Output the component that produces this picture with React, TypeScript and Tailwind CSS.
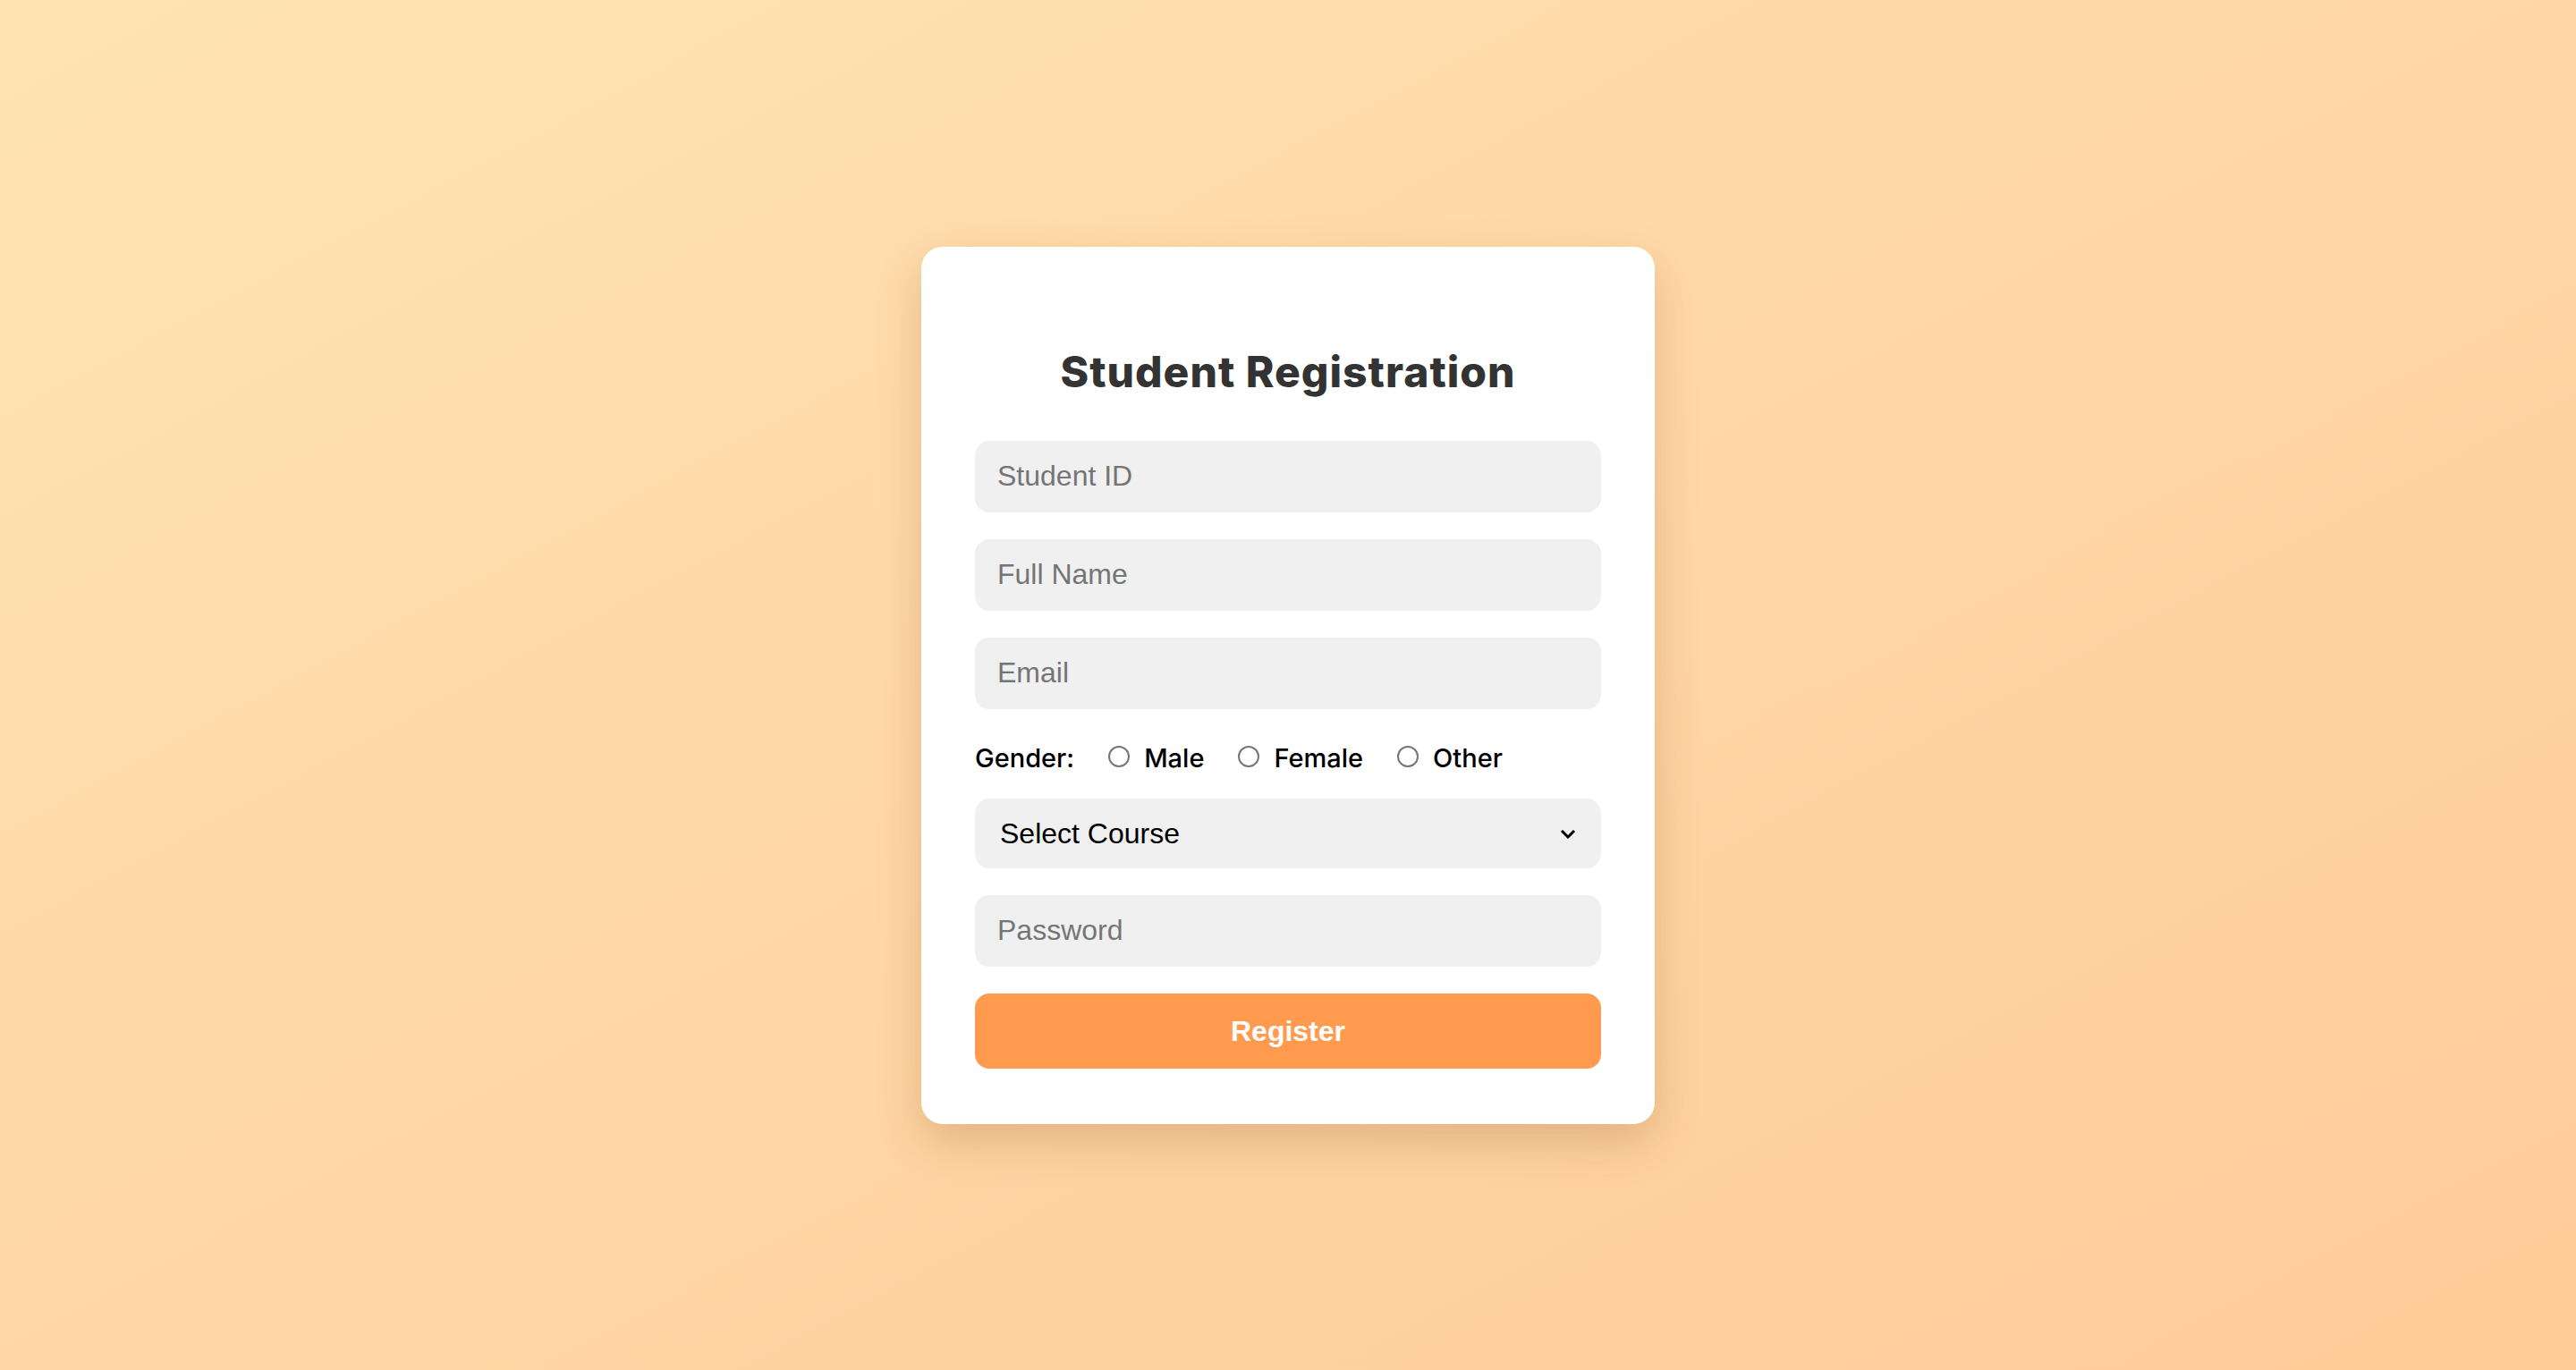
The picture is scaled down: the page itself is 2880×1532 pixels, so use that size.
import { useState } from 'react';

const fieldClass =
  'h-[80px] w-full rounded-[16px] bg-[#f0f0f0] px-[25px] text-[32px] text-black outline-none placeholder:text-[#757575] font-["Liberation_Sans",Arial,sans-serif]';

const genders = ['Male', 'Female', 'Other'];

const App = () => {
  const [gender, setGender] = useState('');

  return (
    <main className="flex h-screen w-full items-center justify-center bg-linear-to-br from-[#ffe3b3] to-[#ffcb97]">
      <form
        onSubmit={(e) => e.preventDefault()}
        className="flex w-[820px] flex-col rounded-[24px] bg-white px-[60px] pt-[111px] pb-[62px] shadow-[0_20px_50px_rgba(120,70,20,0.22)]"
      >
        {/* Title */}
        <h2 className="mb-[48px] text-center font-['Inter',sans-serif] text-[48px] leading-[58px] font-extrabold tracking-[1px] text-[#333333]">
          Student Registration
        </h2>

        <div className="flex flex-col gap-[30px]">
          <input type="text" placeholder="Student ID" className={fieldClass} />
          <input type="text" placeholder="Full Name" className={fieldClass} />
          <input type="email" placeholder="Email" className={fieldClass} />

          {/* Gender */}
          <div className="flex h-[40px] items-center pt-[10px] font-['Inter',sans-serif] text-[29px] font-medium text-black">
            <span className="mr-[38px]">Gender:</span>
            {genders.map((g) => (
              <label key={g} className="mr-[38px] flex items-center gap-[16px]">
                <input
                  type="radio"
                  name="gender"
                  checked={gender === g}
                  onChange={() => setGender(g)}
                  className="relative -top-[2px] h-[24px] w-[24px] appearance-none rounded-full border-2 border-[#767676] bg-white checked:border-[7px] checked:border-[#ff9a4e]"
                />
                <span>{g}</span>
              </label>
            ))}
          </div>

          {/* Course */}
          <div className="relative">
            <select
              defaultValue=""
              className="h-[78px] w-full appearance-none rounded-[16px] bg-[#f0f0f0] pr-[60px] pl-[28px] font-['Liberation_Sans',Arial,sans-serif] text-[32px] text-black outline-none"
            >
              <option value="" disabled>
                Select Course
              </option>
              <option>Computer Science</option>
              <option>Information Technology</option>
              <option>Electronics</option>
              <option>Mechanical</option>
            </select>
            <svg
              viewBox="0 0 18 11"
              className="pointer-events-none absolute top-[34px] right-[28px] h-[11px] w-[18px]"
              fill="none"
              stroke="black"
              strokeWidth="3"
            >
              <path d="M2 2l7 7 7-7" />
            </svg>
          </div>

          <input type="password" placeholder="Password" className={fieldClass} />

          <button
            type="submit"
            className="h-[84px] w-full rounded-[16px] bg-[#ff9a4e] font-['Liberation_Sans',Arial,sans-serif] text-[32px] font-bold text-white"
          >
            Register
          </button>
        </div>
      </form>
    </main>
  );
};

export default App;
